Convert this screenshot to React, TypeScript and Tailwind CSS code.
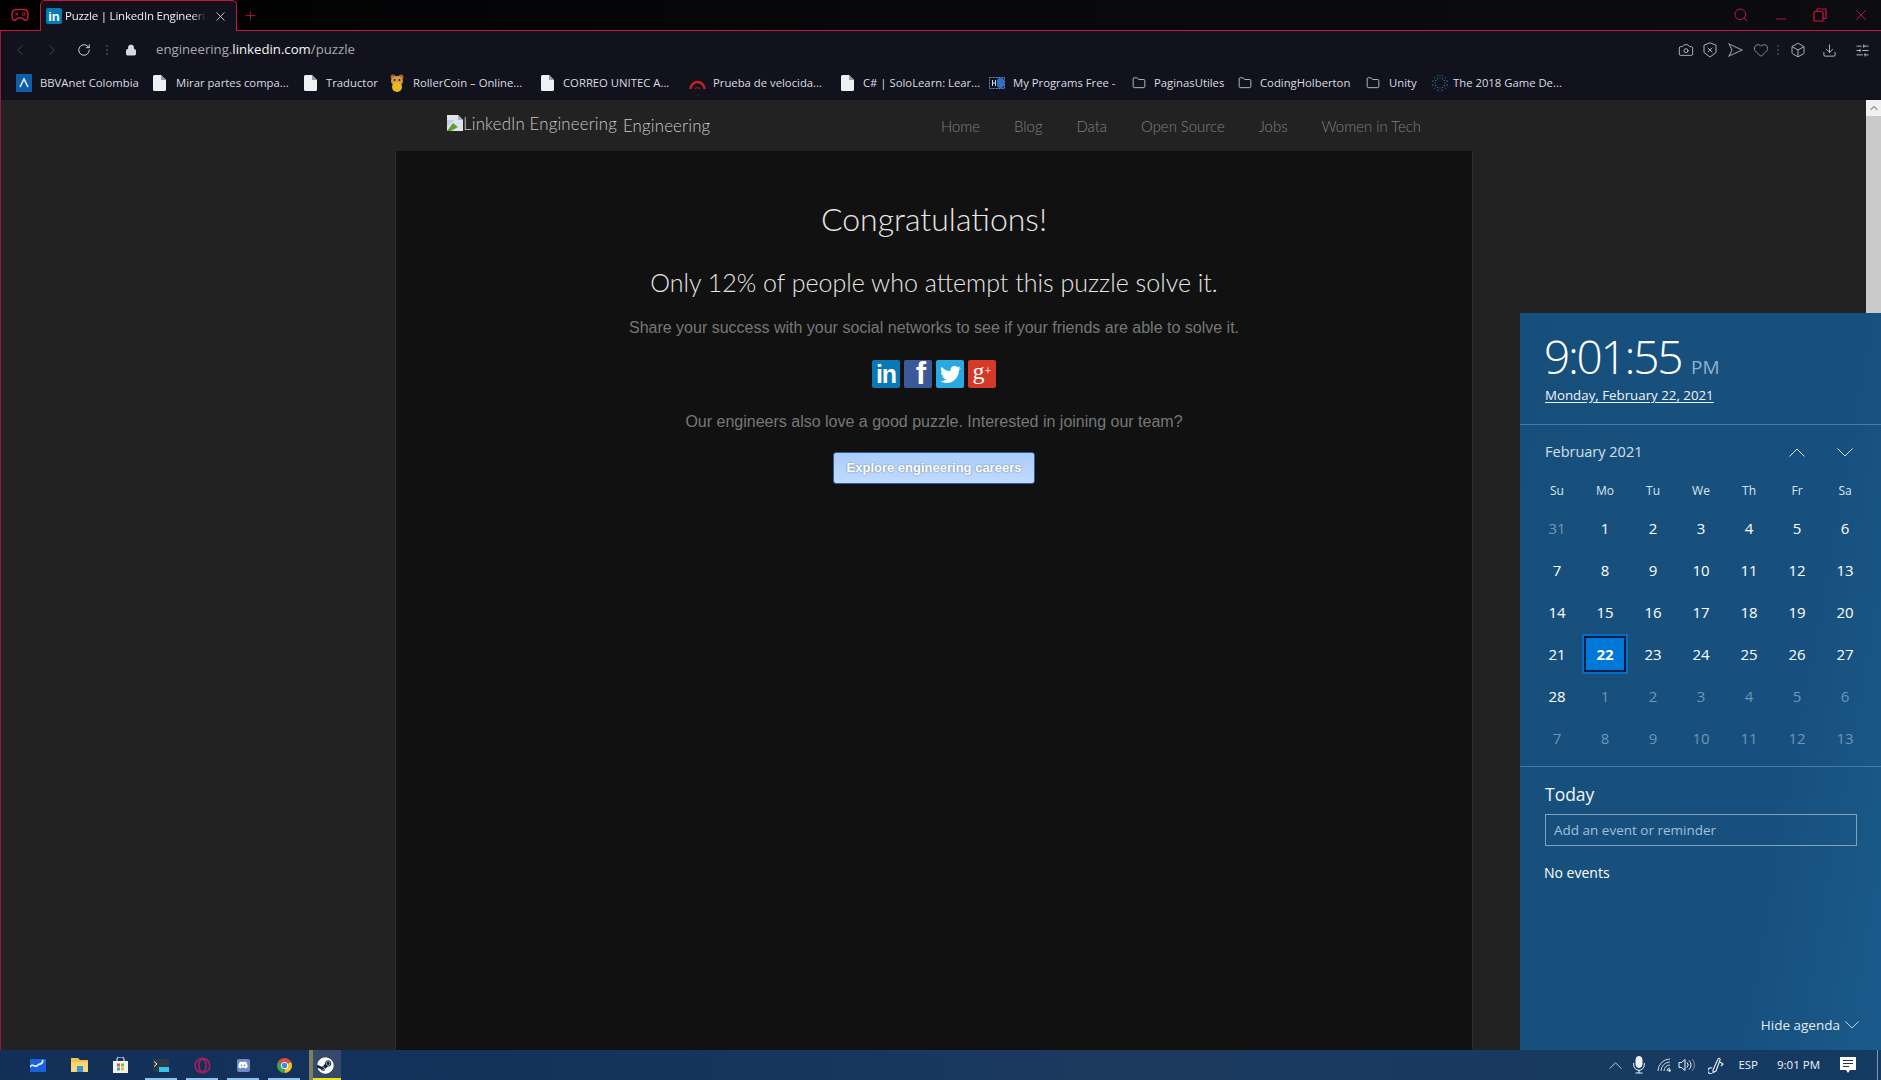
import React from "react";
import { ChevronLeft, ChevronRight, ChevronUp, RotateCw, Lock, Camera, Heart, Box, Download, SlidersHorizontal, Search, Minus, X, Plus, Folder } from "lucide-react";
import { FaTwitter, FaDiscord, FaSteam } from "react-icons/fa";

const winFont = "font-['Open_Sans','Noto_Sans',sans-serif]";
const RED = "#c8173f";

function Wide({ up, w = 16, h = 9, color = "#d6e2ec" }: { up?: boolean; w?: number; h?: number; color?: string }) {
  return (
    <svg width={w} height={h} viewBox="0 0 16 9" fill="none" stroke={color} strokeWidth="1" className="shrink-0">
      <path d={up ? "M0.5 8.5 L8 1 L15.5 8.5" : "M0.5 0.5 L8 8 L15.5 0.5"} />
    </svg>
  );
}
function PageIcon() {
  return (
    <svg width="13" height="16" viewBox="0 0 13 16" className="shrink-0">
      <path d="M0 1.5 A1.5 1.5 0 0 1 1.5 0 H8 L13 5 V14.5 A1.5 1.5 0 0 1 11.5 16 H1.5 A1.5 1.5 0 0 1 0 14.5 Z" fill="#eef0f4" />
      <path d="M8 0 V5 H13" fill="#9a9aa5" />
    </svg>
  );
}
function FolderIcon() {
  return <Folder size={14} strokeWidth={1.4} className="shrink-0 text-[#d8d8de]" />;
}
function Bbva() {
  return (
    <svg width="16" height="18" viewBox="0 0 16 18" className="shrink-0">
      <rect width="16" height="18" fill="#0f5fa8" />
      <path d="M4 13 L8 5 L12 13" fill="none" stroke="#e8f2ff" strokeWidth="1.6" />
    </svg>
  );
}
function Tiger() {
  return (
    <svg width="14" height="18" viewBox="0 0 14 18" className="shrink-0">
      <circle cx="3" cy="3" r="2.5" fill="#a9672a" />
      <circle cx="11" cy="3" r="2.5" fill="#a9672a" />
      <ellipse cx="7" cy="7" rx="6" ry="5" fill="#d99a45" />
      <circle cx="4.5" cy="6" r="1" fill="#222" />
      <circle cx="9.5" cy="6" r="1" fill="#222" />
      <ellipse cx="7" cy="13" rx="5" ry="5" fill="#e9b91f" />
    </svg>
  );
}
function Gauge() {
  return (
    <svg width="17" height="14" viewBox="0 0 17 14" className="shrink-0">
      <path d="M1.5 13 A7 7 0 0 1 15.5 13" fill="none" stroke="#c81f2b" strokeWidth="2.4" />
      <path d="M6 13 A3 3 0 0 1 11 13" fill="none" stroke="#7c1620" strokeWidth="1.6" />
    </svg>
  );
}
function Hd() {
  return (
    <svg width="16" height="14" viewBox="0 0 16 14" className="shrink-0">
      <rect x="0.5" y="1.5" width="15" height="11" fill="none" stroke="#5f8fd0" strokeWidth="1" strokeDasharray="2 1" />
      <rect x="8" y="2" width="7" height="10" rx="3" fill="#2f6fc4" />
      <rect x="3" y="4" width="1" height="6" fill="#c9d9f0" />
      <rect x="6" y="4" width="1" height="6" fill="#c9d9f0" />
      <rect x="3" y="6.5" width="4" height="1" fill="#c9d9f0" />
    </svg>
  );
}
function Dots() {
  const d: React.ReactElement[] = [];
  for (let i = 0; i < 24; i++) {
    const a = (i / 24) * Math.PI * 2;
    const r = i % 2 ? 7.5 : 5;
    d.push(<circle key={i} cx={9 + Math.cos(a) * r} cy={9 + Math.sin(a) * r} r="0.7" fill={i % 3 ? "#2f7fa8" : "#135a80"} />);
  }
  return <svg width="18" height="18" viewBox="0 0 18 18" className="shrink-0">{d}</svg>;
}

const bookmarks = [
  { icon: <Bbva />, label: "BBVAnet Colombia", w: "w-[137px]", g: "gap-[8px]" },
  { icon: <PageIcon />, label: "Mirar partes compa...", w: "w-[151px]", g: "gap-[10px]" },
  { icon: <PageIcon />, label: "Traductor", w: "w-[86px]", g: "gap-[9px]" },
  { icon: <Tiger />, label: "RollerCoin – Online...", w: "w-[151px]", g: "gap-[9px]" },
  { icon: <PageIcon />, label: "CORREO UNITEC A...", w: "w-[148px]", g: "gap-[9px]" },
  { icon: <Gauge />, label: "Prueba de velocida...", w: "w-[152px]", g: "gap-[7px]" },
  { icon: <PageIcon />, label: "C# | SoloLearn: Lear...", w: "w-[148px]", g: "gap-[9px]" },
  { icon: <Hd />, label: "My Programs Free -", w: "w-[143px]", g: "gap-[8px]" },
  { icon: <FolderIcon />, label: "PaginasUtiles", w: "w-[106px]", g: "gap-[8px]" },
  { icon: <FolderIcon />, label: "CodingHolberton", w: "w-[128px]", g: "gap-[8px]" },
  { icon: <FolderIcon />, label: "Unity", w: "w-[65px]", g: "gap-[9px]" },
  { icon: <Dots />, label: "The 2018 Game De...", w: "w-[140px]", g: "gap-[4px]" },
];

function GxIcon() {
  return (
    <svg width="18" height="14" viewBox="0 0 18 14" fill="none" stroke={RED} strokeWidth="1.5">
      <path d="M4.5 1.5 H13.5 C15.8 1.5 17 3.5 17 7 C17 10.5 16 12.5 14.5 12.5 C13 12.5 12.5 10 11 10 H7 C5.5 10 5 12.5 3.5 12.5 C2 12.5 1 10.5 1 7 C1 3.5 2.2 1.5 4.5 1.5 Z" />
      <path d="M4.5 5 L7 7.5 M7 5 L4.5 7.5" strokeWidth="1" />
      <circle cx="12.5" cy="6.2" r="1.4" strokeWidth="1" />
    </svg>
  );
}

function BrokenImage() {
  return (
    <svg width="16" height="16" viewBox="0 0 16 16" className="shrink-0 -mt-[6px]">
      <path d="M0 0 H11 L16 5 V16 H0 Z" fill="#dfe3ea" />
      <path d="M11 0 V5 H16" fill="#9fb0c8" />
      <path d="M0 16 L6 8 L11 12 L4 16 Z" fill="#5aa036" />
      <path d="M0 5 H7 L0 12 Z" fill="#bcd0ee" />
    </svg>
  );
}

function Social() {
  return (
    <div className="flex justify-center gap-1 mt-[21px]">
      <div className="w-7 h-7 rounded-[2px] bg-[#0a78b5] flex items-center justify-center text-white font-bold text-[25px] leading-[28px] font-['Liberation_Sans',sans-serif] tracking-[-1px]">in</div>
      <div className="w-7 h-7 rounded-[2px] bg-[#3b5998] flex items-end justify-end pr-[6px] text-white font-bold text-[31px] leading-[28px] font-['Liberation_Sans',sans-serif]">f</div>
      <div className="w-7 h-7 rounded-[2px] bg-[#29a9e1] flex items-center justify-center text-white"><FaTwitter size={21} /></div>
      <div className="w-7 h-7 rounded-[2px] bg-[#d33a27] flex items-center justify-center text-white font-['Liberation_Serif',serif] text-[24px] leading-none pb-[6px]">g<span className="text-[12px]">+</span></div>
    </div>
  );
}

const weeks = [
  [[31, 0], [1, 1], [2, 1], [3, 1], [4, 1], [5, 1], [6, 1]],
  [[7, 1], [8, 1], [9, 1], [10, 1], [11, 1], [12, 1], [13, 1]],
  [[14, 1], [15, 1], [16, 1], [17, 1], [18, 1], [19, 1], [20, 1]],
  [[21, 1], [22, 2], [23, 1], [24, 1], [25, 1], [26, 1], [27, 1]],
  [[28, 1], [1, 0], [2, 0], [3, 0], [4, 0], [5, 0], [6, 0]],
  [[7, 0], [8, 0], [9, 0], [10, 0], [11, 0], [12, 0], [13, 0]],
];

function Calendar() {
  return (
    <aside className={`absolute left-[1520px] top-[313px] w-[361px] h-[737px] flex flex-col text-white bg-[linear-gradient(100deg,#174f7c,#17507e_70%,#1a5a8b)] ${winFont}`}>
      <div className="h-[112px] pl-[24px] pt-[17px] border-b border-[#4a7ba3] shrink-0">
        <div className="flex items-baseline h-[52px]">
          <span className="text-[46px] leading-[52px] font-light tracking-[-2.3px]">9:01:55</span>
          <span className="text-[19px] ml-[10px] text-[#8fb2cf]">PM</span>
        </div>
        <div className="text-[13.3px] leading-[18px] mt-[4px] ml-[1px] underline underline-offset-2 text-[#eef4f9]">Monday, February 22, 2021</div>
      </div>
      <div className="flex items-center justify-between pl-[25px] pr-[28px] h-[54px] shrink-0">
        <span className="text-[14.5px] text-[#d3e0ea]">February 2021</span>
        <div className="flex gap-[32px]">
          <Wide up />
          <Wide />
        </div>
      </div>
      <div className="grid grid-cols-7 w-[336px] ml-[13px] h-[24px] items-center text-center text-[12px] text-[#dbe6ee] shrink-0">
        {["Su", "Mo", "Tu", "We", "Th", "Fr", "Sa"].map((d) => <span key={d}>{d}</span>)}
      </div>
      <div className="w-[336px] ml-[13px] mt-[4px] shrink-0 h-[252px] grid grid-rows-6">
        {weeks.map((w, i) => (
          <div key={i} className="grid grid-cols-7 items-center text-center text-[15px]">
            {w.map(([n, s], j) =>
              s === 2 ? (
                <div key={j} className="mx-[3px] h-[36px] flex items-center justify-center font-bold bg-[#0078d7] border-2 border-[#0a1e4a] outline-2 outline-[#0a6cc0]">{n}</div>
              ) : (
                <div key={j} className={s === 1 ? "text-white" : "text-[#6f96b6]"}>{n}</div>
              )
            )}
          </div>
        ))}
      </div>
      <div className="border-t border-[#4a7ba3] mt-[7px] pl-[25px] pt-[13px] flex-1 flex flex-col">
        <div className="text-[17.5px] leading-[28px] text-[#f2f6fa]">Today</div>
        <div className="w-[312px] h-[32px] mt-[6px] border border-[#7fa4c2] pl-[8px] text-[13.5px] leading-[30px] text-[#a5c0d6]">Add an event or reminder</div>
        <div className="text-[14px] leading-[20px] mt-[17px] -ml-[1px]">No events</div>
        <div className="mt-auto mb-[15px] mr-[22px] flex items-center justify-end gap-[5px] text-[13.5px] text-[#e2ecf4]">
          Hide agenda <Wide w={14} h={8} color="#e2ecf4" />
        </div>
      </div>
    </aside>
  );
}

function TaskIcon({ children, bar, active }: { children: React.ReactNode; bar?: boolean; active?: boolean }) {
  return (
    <div className={`relative w-[32px] mr-[9px] h-[30px] flex items-center justify-center ${active ? "bg-[#37496a]" : ""}`}>
      {children}
      {bar && <div className={`absolute bottom-0 left-0 right-0 h-[2px] ${active ? "bg-[#f2e21c]" : "bg-[#8fc3ee]"}`} />}
      {active && <div className="absolute top-0 left-0 bottom-0 w-[4px] bg-[#7a7f5e]" />}
    </div>
  );
}

function Taskbar() {
  return (
    <footer className={`h-[30px] shrink-0 flex items-center bg-[linear-gradient(90deg,#122f58,#14345c_35%,#1c3a5e_60%,#143a62)] pl-[22px] text-[#eef3f8] ${winFont}`}>
      <TaskIcon>
        <svg width="16" height="13" viewBox="0 0 16 13"><rect width="16" height="13" fill="#1c62e0" /><path d="M0 8 C3 3 5 10 8 6 C10 4 12 7 13 1" fill="none" stroke="#e8f1ff" strokeWidth="1.6" /></svg>
      </TaskIcon>
      <TaskIcon>
        <svg width="17" height="14" viewBox="0 0 17 14"><path d="M0 0 H7 L9 2 H17 V14 H0 Z" fill="#f0c14e" /><path d="M0 4 H17 V14 H0 Z" fill="#f7d774" /><rect x="6" y="8" width="6" height="6" fill="#3a93d6" /></svg>
      </TaskIcon>
      <TaskIcon>
        <svg width="15" height="16" viewBox="0 0 15 16"><path d="M0 4 H15 V16 H0 Z" fill="#f3f3f3" /><path d="M4 4 V2 A2 2 0 0 1 6 0 H9 A2 2 0 0 1 11 2 V4" fill="none" stroke="#f3f3f3" /><rect x="4" y="6.5" width="3" height="3" fill="#e8533a" /><rect x="8" y="6.5" width="3" height="3" fill="#7eb93f" /><rect x="4" y="10.5" width="3" height="3" fill="#2fa4e7" /><rect x="8" y="10.5" width="3" height="3" fill="#f5b921" /></svg>
      </TaskIcon>
      <TaskIcon bar>
        <svg width="16" height="13" viewBox="0 0 16 13"><rect width="16" height="13" fill="#2c3a48" /><path d="M1 2.5 L4 5 L1 7.5" fill="none" stroke="#f0f0f0" strokeWidth="1" /><rect x="6" y="8" width="10" height="5" fill="#35c4ea" /></svg>
      </TaskIcon>
      <TaskIcon bar>
        <svg width="17" height="17" viewBox="0 0 17 17" fill="none" stroke="#a81e5e" strokeWidth="1.6"><circle cx="8.5" cy="8.5" r="7.3" /><ellipse cx="8.5" cy="8.5" rx="3.6" ry="6.4" /></svg>
      </TaskIcon>
      <TaskIcon bar>
        <div className="w-[13px] h-[13px] bg-[#7289c8] rounded-[2px] flex items-center justify-center text-white"><FaDiscord size={10} /></div>
      </TaskIcon>
      <TaskIcon bar>
        <svg width="15" height="15" viewBox="0 0 16 16">
          <path d="M8 8 L1.1 4 A8 8 0 0 1 14.9 4 Z" fill="#dd4b3e" />
          <path d="M8 8 L14.9 4 A8 8 0 0 1 8 16 Z" fill="#f5c02c" />
          <path d="M8 8 L8 16 A8 8 0 0 1 1.1 4 Z" fill="#3fa34d" />
          <circle cx="8" cy="8" r="3.8" fill="#fff" /><circle cx="8" cy="8" r="2.9" fill="#3f86e8" />
        </svg>
      </TaskIcon>
      <TaskIcon bar active>
        <div className="w-[17px] h-[17px] rounded-full bg-[#0e2340] flex items-center justify-center text-white"><FaSteam size={17} /></div>
      </TaskIcon>
      <div className="ml-auto flex items-center h-full relative">
        <Wide up w={13} h={7} color="#eef3f8" />
        <svg width="12" height="18" viewBox="0 0 12 18" className="ml-[11px] mr-[12px] shrink-0" fill="none" stroke="#eef3f8" strokeWidth="1"><rect x="3" y="0.5" width="6" height="11" rx="3" fill="#eef3f8" /><path d="M0.7 7 V9 A5.3 5.3 0 0 0 11.3 9 V7 M6 14 V17 M2.5 17 H9.5" /></svg>
        <svg width="14" height="14" viewBox="0 0 14 14" fill="none" stroke="#dfe8f0" strokeWidth="0.9" className="mr-[7px] shrink-0"><path d="M1 13 A12 12 0 0 1 13 1" /><path d="M4 13 A9 9 0 0 1 13 4" /><path d="M7 13 A6 6 0 0 1 13 7" /><path d="M10 13 A3 3 0 0 1 13 10" /><circle cx="12.5" cy="12.5" r="1.2" fill="#fff" stroke="none" /></svg>
        <svg width="17" height="14" viewBox="0 0 17 14" fill="none" stroke="#eef3f8" strokeWidth="1" className="mr-[13px] shrink-0"><path d="M1 4.5 H3.5 L7 1.5 V12.5 L3.5 9.5 H1 Z" /><path d="M9 4.5 A3.5 3.5 0 0 1 9 9.5" /><path d="M11 2.5 A6 6 0 0 1 11 11.5" /><path d="M14 1 A8.5 8.5 0 0 1 14 13" stroke="#7f95ab" /></svg>
        <svg width="17" height="17" viewBox="0 0 17 17" fill="none" stroke="#eef3f8" strokeWidth="1.1" className="mr-[13px] shrink-0"><path d="M5 13 L10 2 C11 0.5 12.5 1.5 12 3 L8 14 L5 15.5 Z" /><path d="M4 11 A3 3 0 1 0 4 16.5" /><path d="M12 5 L15 7 L13 9" /></svg>
        <span className="text-[11.5px] mr-[19px]">ESP</span>
        <span className="text-[11.5px] mr-[20px]">9:01 PM</span>
        <svg width="16" height="17" viewBox="0 0 16 17" className="mr-[21px] shrink-0"><path d="M0 0 H16 V13 H10 L8 16 L6 13 H0 Z" fill="#fff" /><path d="M3 3.5 H13 M3 6.5 H13 M3 9.5 H9" stroke="#14345c" strokeWidth="1" /></svg>
        <div className="w-px h-[30px] bg-[#8298b0] mr-[3px]" />
      </div>
    </footer>
  );
}

export default function App() {
  return (
    <div className="relative w-[1881px] h-[1080px] overflow-hidden flex flex-col bg-black">
      {/* tab strip */}
      <div className={`h-[31px] shrink-0 flex items-end border-b border-[#c8173f] bg-[linear-gradient(90deg,#000,#08080c_50%,#0b0b10)] ${winFont}`}>
        <div className="w-[40px] h-[30px] flex items-center justify-center"><GxIcon /></div>
        <div className="relative -mb-px w-[197px] h-[31px] bg-[#12121c] border border-b-0 border-[#c8173f] rounded-t-[5px] flex items-center pl-[5px] pr-[8px]">
          <div className="w-[16px] h-[16px] rounded-[2px] bg-[#0a78b5] flex items-center justify-center text-white text-[13px] font-bold leading-none font-['Liberation_Sans',sans-serif] shrink-0">in</div>
          <span className="ml-[3px] w-[143px] overflow-hidden whitespace-nowrap text-[11.5px] tracking-[-0.2px] text-[#eef0f4] [mask-image:linear-gradient(90deg,#000_90%,transparent)]">Puzzle | LinkedIn Engineering</span>
          <X size={15} strokeWidth={1.3} className="ml-[7px] text-[#e6e6ea] shrink-0" />
        </div>
        <div className="ml-[6px] h-[30px] flex items-center"><Plus size={15} strokeWidth={1.2} className="text-[#c8173f]" /></div>
        <div className="ml-auto h-[30px] flex items-center text-[#c8173f] pr-[11px]">
          <Search size={16} strokeWidth={1.5} className="mr-[24px]" />
          <Minus size={16} strokeWidth={1.3} className="mr-[24px] translate-y-[4px]" />
          <svg width="14" height="14" viewBox="0 0 14 14" fill="none" stroke="#c8173f" strokeWidth="1.2" className="mr-[25px]"><rect x="1" y="3.5" width="9" height="9.5" rx="1" /><path d="M4 3.5 V1 H13 V10.5 H10" /></svg>
          <X size={18} strokeWidth={1.2} />
        </div>
      </div>

      {/* body with the red window edge */}
      <div className="flex-1 flex flex-col border-l border-[#a0153a] min-h-0">
        {/* address row */}
        <div className={`h-[38px] shrink-0 bg-[#12121c] flex items-center pl-[10px] pr-[11px] ${winFont}`}>
          <ChevronLeft size={18} strokeWidth={1.2} className="text-[#4a4a55]" />
          <ChevronRight size={18} strokeWidth={1.2} className="ml-[14px] text-[#4a4a55]" />
          <RotateCw size={14} strokeWidth={1.6} className="ml-[16px] text-[#d8d8de]" />
          <div className="ml-[15px] h-[10px] w-[2px] border-l-2 border-dotted border-[#3a3a44]" />
          <Lock size={12} strokeWidth={2} fill="#d8d8de" className="ml-[17px] text-[#d8d8de]" />
          <span className="ml-[19px] text-[13.2px] text-[#a8a8b0] whitespace-nowrap">engineering.<span className="text-[#f2f2f5]">linkedin.com</span>/puzzle</span>
          <div className="ml-auto flex items-center">
            <Camera size={16} strokeWidth={1.2} className="text-[#d0d0d6]" />
            <svg width="14" height="16" viewBox="0 0 14 16" fill="none" stroke="#b0b0b8" strokeWidth="1" className="ml-[9px]"><path d="M7 0.8 L13 3.2 V10.5 L7 15 L1 10.5 V3.2 Z" /><path d="M4.7 5.7 L9.3 10.3 M9.3 5.7 L4.7 10.3" /></svg>
            <svg width="15" height="14" viewBox="0 0 15 14" fill="none" stroke="#8a8a92" strokeWidth="1.1" className="ml-[11px]"><path d="M1 1 L14 7 L1 13 L4 7 Z" /></svg>
            <Heart size={16} strokeWidth={1.1} className="ml-[10px] text-[#b0b0b8]" />
            <div className="ml-[8px] h-[10px] w-[2px] border-l-2 border-dotted border-[#3a3a44]" />
            <Box size={16} strokeWidth={1.2} className="ml-[11px] text-[#d0d0d6]" />
            <Download size={15} strokeWidth={1.2} className="ml-[16px] text-[#e6e6ea]" />
            <SlidersHorizontal size={15} strokeWidth={1.2} className="ml-[18px] text-[#e6e6ea]" />
          </div>
        </div>

        {/* bookmarks */}
        <div className={`h-[31px] shrink-0 bg-[#12121c] flex items-center pl-[15px] pb-[3px] text-[11.3px] text-[#dcdce2] ${winFont}`}>
          {bookmarks.map((b) => (
            <div key={b.label} className={`${b.w} ${b.g} shrink-0 flex items-center whitespace-nowrap`}>
              {b.icon}
              <span>{b.label}</span>
            </div>
          ))}
        </div>

        {/* page + scrollbar */}
        <div className="flex-1 flex min-h-0">
          <div className="flex-1 flex flex-col min-w-0 bg-[#222222]">
            <nav className="h-[51px] shrink-0 flex items-center font-['Lato',sans-serif] font-light">
              <div className="ml-[446px] flex items-center w-[490px]">
                <BrokenImage />
                <span className="text-[16.8px] text-[#c8c8c8] leading-none -mt-[3px] tracking-[0.2px]">LinkedIn Engineering</span>
                <span className="ml-[6px] text-[16.8px] text-[#c8c8c8] tracking-[0.2px]">Engineering</span>
              </div>
              <div className="ml-[4px] mt-[2px] flex items-center gap-[34px] text-[14.9px] text-[#808080]">
                <span>Home</span><span>Blog</span><span>Data</span><span>Open Source</span><span>Jobs</span><span>Women in Tech</span>
              </div>
            </nav>
            <main className="flex-1 ml-[394px] w-[1078px] bg-[#111111] border-x border-[#2c2c2c] text-center font-['Liberation_Sans',sans-serif] text-[16px] text-[#777777]">
              <h1 className="mt-[48px] font-['Lato',sans-serif] font-light text-[32px] leading-[40px] text-[#e6e6e6]">Congratulations!</h1>
              <h2 className="mt-[26px] font-['Lato',sans-serif] font-light text-[25px] leading-[34px] text-[#e6e6e6]">Only 12% of people who attempt this puzzle solve it.</h2>
              <p className="mt-[18px] leading-[22px]">Share your success with your social networks to see if your friends are able to solve it.</p>
              <Social />
              <p className="mt-[23px] leading-[22px]">Our engineers also love a good puzzle. Interested in joining our team?</p>
              <div className="mt-[19px] mx-auto w-[202px] h-[32px] rounded-[3px] border border-[#2d5f96] bg-[linear-gradient(180deg,#a9ccfb,#c2dbfd)] text-white font-bold text-[13px] leading-[30px] [text-shadow:0_0_2px_rgba(0,0,0,0.45)]">Explore engineering careers</div>
            </main>
          </div>
          {/* scrollbar */}
          <div className="w-[15px] shrink-0 flex flex-col bg-[#f1f1f1]">
            <div className="h-[16px] flex items-center justify-center"><ChevronUp size={12} strokeWidth={3} className="text-[#a3a3a3]" /></div>
            <div className="h-[200px] bg-[#c9c9c9]" />
          </div>
        </div>
      </div>

      <Taskbar />
      <Calendar />
    </div>
  );
}
